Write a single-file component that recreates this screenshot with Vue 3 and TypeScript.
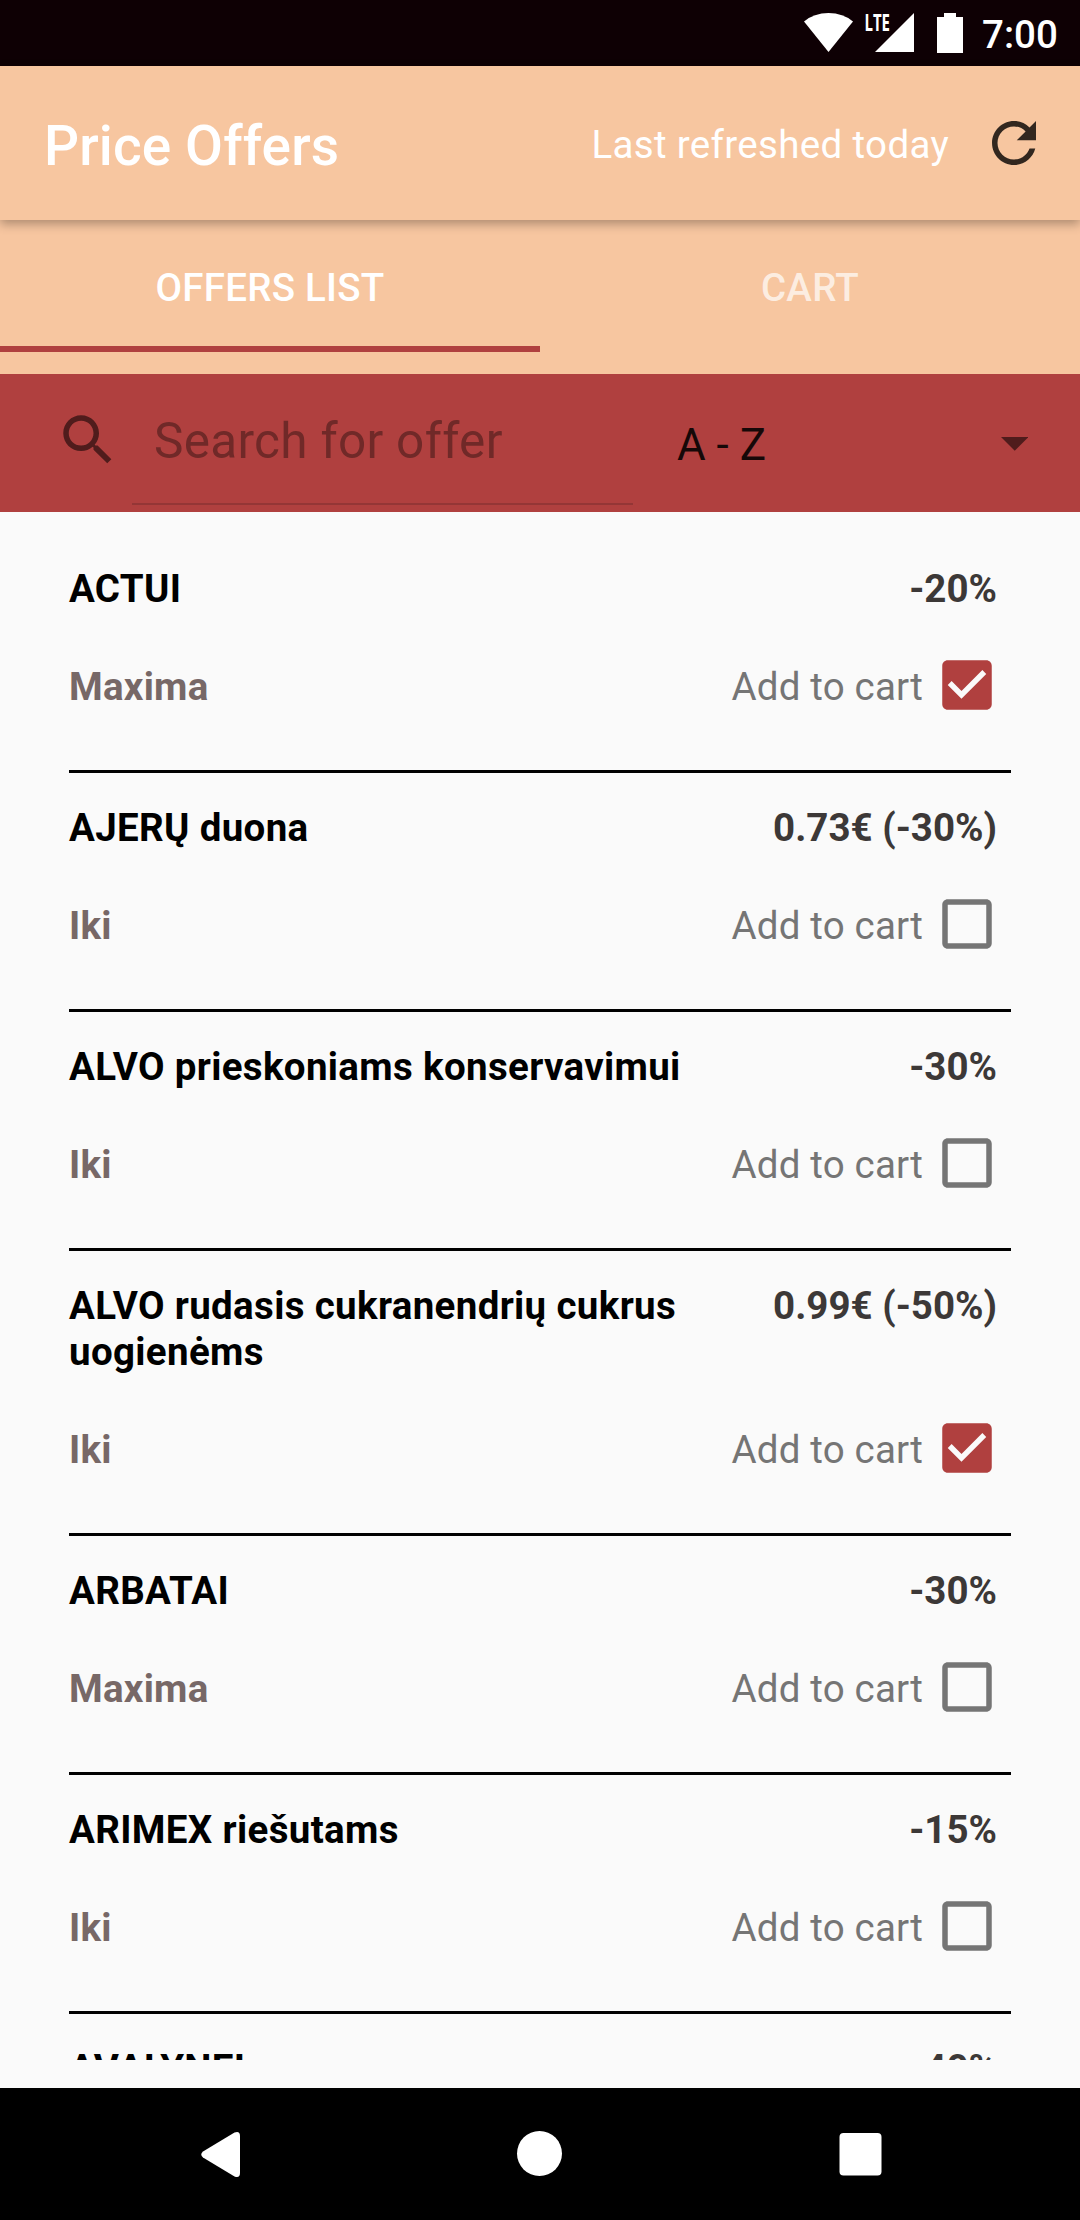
<script setup lang="ts">
import { ref } from 'vue'

interface Offer {
  name: string
  price: string
  shop?: string
  inCart: boolean
}

const tabs = ['OFFERS LIST', 'CART']
const activeTab = ref(0)

const offers = ref<Offer[]>([
  { name: 'ACTUI', price: '-20%', shop: 'Maxima', inCart: true },
  { name: 'AJERŲ duona', price: '0.73€ (-30%)', shop: 'Iki', inCart: false },
  { name: 'ALVO prieskoniams konservavimui', price: '-30%', shop: 'Iki', inCart: false },
  { name: 'ALVO rudasis cukranendrių cukrus uogienėms', price: '0.99€ (-50%)', shop: 'Iki', inCart: true },
  { name: 'ARBATAI', price: '-30%', shop: 'Maxima', inCart: false },
  { name: 'ARIMEX riešutams', price: '-15%', shop: 'Iki', inCart: false },
  { name: 'AVALYNEI', price: '-40%', inCart: false },
])
</script>

<template>
  <div class="screen">
    <div class="status">
      <svg class="status-icons" width="180" height="66" viewBox="0 0 180 66" fill="#fff">
        <path d="M24 21.5Q34 13 48.500 13T73 21.500L48.500 52Z" />
        <text x="84.500" y="31" class="lte" textLength="25.500" lengthAdjust="spacingAndGlyphs">LTE</text>
        <path d="M134 13V52H95Z" />
        <path d="M164 13h12v4h7v36h-26V17h7z" />
      </svg>
      <span class="clock">7:00</span>
    </div>

    <header class="appbar">
      <h1 class="title">Price Offers</h1>
      <span class="refreshed">Last refreshed today</span>
      <svg class="refresh" width="66" height="66" viewBox="0 0 24 24">
        <path d="M17.650 6.350C16.200 4.900 14.210 4 12 4c-4.420 0-7.990 3.580-7.990 8s3.570 8 7.990 8c3.730 0 6.840-2.550 7.730-6h-2.080c-.82 2.330-3.040 4-5.650 4-3.310 0-6-2.690-6-6s2.690-6 6-6c1.660 0 3.140.69 4.220 1.780L13 11h7V4l-2.350 2.350z" />
      </svg>
    </header>

    <nav class="tabs">
      <div
        v-for="(tab, i) in tabs"
        :key="tab"
        class="tab"
        :class="{ active: i === activeTab }"
        @click="activeTab = i"
      >{{ tab }}</div>
    </nav>

    <div class="filter">
      <svg class="search-icon" width="66" height="66" viewBox="0 0 24 24">
        <path d="M15.500 14h-.79l-.28-.27C15.410 12.590 16 11.110 16 9.500 16 5.910 13.090 3 9.500 3S3 5.910 3 9.500 5.910 16 9.500 16c1.610 0 3.090-.59 4.230-1.570l.27.28v.79l5 4.990L20.490 19l-4.990-5zm-6 0C7.010 14 5 11.990 5 9.500S7.010 5 9.500 5 14 7.010 14 9.500 11.990 14 9.500 14z" />
      </svg>
      <div class="query">Search for offer</div>
      <div class="sort">
        <span>A - Z</span>
        <svg class="caret" width="27.500" height="13.750" viewBox="0 0 10 5"><path d="M0 0l5 5 5-5z" /></svg>
      </div>
    </div>

    <main class="list">
      <article v-for="offer in offers" :key="offer.name" class="offer">
        <div class="row">
          <div class="name">{{ offer.name }}</div>
          <div class="price">{{ offer.price }}</div>
        </div>
        <div v-if="offer.shop" class="row second">
          <div class="shop">{{ offer.shop }}</div>
          <div class="cart" @click="offer.inCart = !offer.inCart">
            <span>Add to cart</span>
            <svg class="box" :class="{ checked: offer.inCart }" width="66" height="66" viewBox="0 0 24 24">
              <path v-if="offer.inCart" d="M19 3H5c-1.110 0-2 .9-2 2v14c0 1.100.89 2 2 2h14c1.110 0 2-.9 2-2V5c0-1.100-.89-2-2-2zm-9 14l-5-5 1.410-1.410L10 14.170l7.590-7.590L19 8l-9 9z" />
              <path v-else d="M19 5v14H5V5h14m0-2H5c-1.100 0-2 .9-2 2v14c0 1.100.9 2 2 2h14c1.100 0 2-.9 2-2V5c0-1.100-.9-2-2-2z" />
            </svg>
          </div>
        </div>
      </article>
    </main>

    <footer class="navbar">
      <svg width="1080" height="132" viewBox="0 0 1080 132" fill="#fff">
        <path d="M203 63.500L234.500 44.500Q240 42.500 240 48V85Q240 90.500 234.500 88.500L203 69.500Q199.500 66.500 203 63.500Z" />
        <circle cx="539.500" cy="65.500" r="22.500" />
        <rect x="839.500" y="45" width="42" height="42.500" rx="4" />
      </svg>
    </footer>
  </div>
</template>

<style>
body {
  background: #fafafa;
}
</style>

<style scoped>
.screen {
  width: 1080px;
  height: 2220px;
  display: flex;
  flex-direction: column;
  overflow: hidden;
  background: #fafafa;
  font-family: Roboto, sans-serif;
  font-size: 38.5px;
  line-height: 46px;
}
.status {
  height: 66px;
  flex: none;
  display: flex;
  align-items: center;
  background: #0e0004;
  color: #fff;
}
.status-icons {
  margin-left: 780px;
  overflow: visible;
}
.lte {
  font: 700 24px "Open Sans", sans-serif;
}
.clock {
  margin: 3px 0 0 22px;
  font-weight: 500;
}
.appbar {
  height: 154px;
  flex: none;
  box-sizing: border-box;
  display: flex;
  align-items: center;
  padding: 0 33px 0 44px;
  background: #f7c6a0;
  color: #fff;
  position: relative;
  z-index: 1;
  box-shadow: 0 4px 10px rgba(0, 0, 0, 0.3);
}
.title {
  flex: 1;
  margin: 5px 0 0;
  font-size: 55px;
  font-weight: 500;
  line-height: 64px;
  letter-spacing: 0.12px;
}
.refreshed {
  margin: 3px 32px 0 0;
  letter-spacing: 0.34px;
}
.refresh {
  fill: #32271f;
}
.tabs {
  height: 154px;
  flex: none;
  box-sizing: border-box;
  display: flex;
  padding-bottom: 22px;
  background: #f7c6a0;
}
.tab {
  flex: 1;
  box-sizing: border-box;
  padding-top: 45px;
  border-bottom: 6px solid transparent;
  text-align: center;
  font-weight: 500;
  letter-spacing: 0.24px;
  color: rgba(255, 255, 255, 0.7);
}
.tab.active {
  color: #fff;
  border-color: #b0403f;
}
.filter {
  height: 138px;
  flex: none;
  display: flex;
  background: #b0403f;
}
.search-icon {
  margin: 33px 11px 0 55px;
  fill: #501c1c;
}
.query {
  width: 501px;
  height: 131px;
  box-sizing: border-box;
  padding: 38px 0 0 22px;
  border-bottom: 2px solid #943636;
  font-size: 49.5px;
  line-height: 58px;
  letter-spacing: 0.3px;
  color: #702928;
}
.sort {
  flex: 1;
  display: flex;
  justify-content: space-between;
  padding: 45px 52px 0 44px;
  font-size: 44px;
  line-height: 52px;
  color: #160808;
}
.caret {
  margin-top: 18px;
  fill: #501c1c;
}
.list {
  height: 1526px;
  flex: none;
  overflow: hidden;
  padding: 22px 69px 0;
}
.offer {
  padding: 32px 14px 60px 0;
  border-bottom: 3px solid #000;
}
.row {
  display: flex;
  justify-content: space-between;
}
.second {
  margin-top: 52px;
}
.name {
  width: 640px;
  font-weight: 700;
  letter-spacing: 0.34px;
  color: #000;
}
.price {
  font-weight: 700;
  color: #3c3837;
}
.shop {
  font-weight: 700;
  letter-spacing: 0.25px;
  color: #776867;
}
.cart {
  display: flex;
  align-items: center;
  height: 46px;
  letter-spacing: 0.18px;
  color: #757575;
}
.box {
  margin: 0 -3px 0 11px;
  position: relative;
  top: -2px;
  fill: #757575;
}
.box.checked {
  fill: #b0403f;
}
.navbar {
  height: 132px;
  flex: none;
  margin-top: auto;
  background: #000;
}
.navbar svg {
  display: block;
}
</style>
